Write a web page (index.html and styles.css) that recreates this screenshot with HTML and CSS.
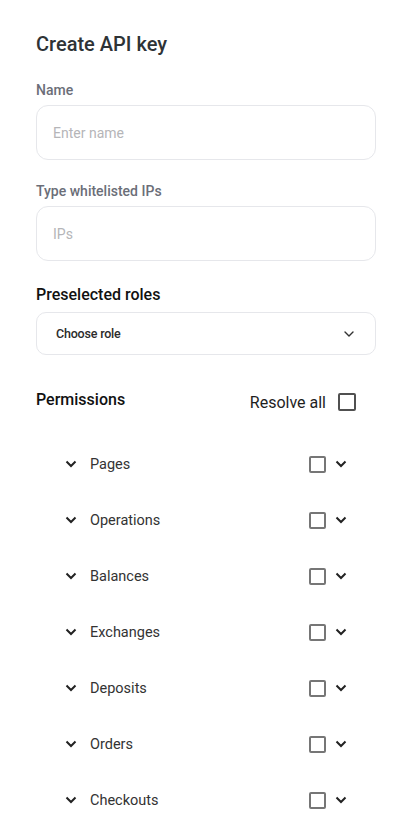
FILE: index.html
```html
<!DOCTYPE html>
<html>
<head>
<meta charset="utf-8">
<link rel="stylesheet" href="styles.css">
</head>
<body>
<div class="page">
  <h1 class="title">Create API key</h1>

  <div class="field-label">Name</div>
  <div class="input"><span class="placeholder">Enter name</span></div>

  <div class="field-label second">Type whitelisted IPs</div>
  <div class="input"><span class="placeholder">IPs</span></div>

  <div class="section-title roles">Preselected roles</div>
  <div class="select">
    <span class="select-text">Choose role</span>
    <svg class="select-chev" width="10" height="6" viewBox="0 0 10 6"><path d="M1 1l4 4 4-4" fill="none" stroke="#333" stroke-width="1.4" stroke-linecap="round" stroke-linejoin="round"/></svg>
  </div>

  <div class="perm-head">
    <span class="section-title">Permissions</span>
    <span class="resolve">Resolve all <span class="checkbox big"></span></span>
  </div>

  <div class="perm-list">
    <div class="perm-row">
      <svg class="chev" width="12" height="8" viewBox="0 0 12 8"><path d="M1.5 1.5l4.5 4.5 4.5-4.5" fill="none" stroke="#222" stroke-width="2"/></svg>
      <span class="perm-name">Pages</span>
      <span class="checkbox"></span>
      <svg class="chev right" width="12" height="8" viewBox="0 0 12 8"><path d="M1.5 1.5l4.5 4.5 4.5-4.5" fill="none" stroke="#222" stroke-width="2"/></svg>
    </div>
    <div class="perm-row">
      <svg class="chev" width="12" height="8" viewBox="0 0 12 8"><path d="M1.5 1.5l4.5 4.5 4.5-4.5" fill="none" stroke="#222" stroke-width="2"/></svg>
      <span class="perm-name">Operations</span>
      <span class="checkbox"></span>
      <svg class="chev right" width="12" height="8" viewBox="0 0 12 8"><path d="M1.5 1.5l4.5 4.5 4.5-4.5" fill="none" stroke="#222" stroke-width="2"/></svg>
    </div>
    <div class="perm-row">
      <svg class="chev" width="12" height="8" viewBox="0 0 12 8"><path d="M1.5 1.5l4.5 4.5 4.5-4.5" fill="none" stroke="#222" stroke-width="2"/></svg>
      <span class="perm-name">Balances</span>
      <span class="checkbox"></span>
      <svg class="chev right" width="12" height="8" viewBox="0 0 12 8"><path d="M1.5 1.5l4.5 4.5 4.5-4.5" fill="none" stroke="#222" stroke-width="2"/></svg>
    </div>
    <div class="perm-row">
      <svg class="chev" width="12" height="8" viewBox="0 0 12 8"><path d="M1.5 1.5l4.5 4.5 4.5-4.5" fill="none" stroke="#222" stroke-width="2"/></svg>
      <span class="perm-name">Exchanges</span>
      <span class="checkbox"></span>
      <svg class="chev right" width="12" height="8" viewBox="0 0 12 8"><path d="M1.5 1.5l4.5 4.5 4.5-4.5" fill="none" stroke="#222" stroke-width="2"/></svg>
    </div>
    <div class="perm-row">
      <svg class="chev" width="12" height="8" viewBox="0 0 12 8"><path d="M1.5 1.5l4.5 4.5 4.5-4.5" fill="none" stroke="#222" stroke-width="2"/></svg>
      <span class="perm-name">Deposits</span>
      <span class="checkbox"></span>
      <svg class="chev right" width="12" height="8" viewBox="0 0 12 8"><path d="M1.5 1.5l4.5 4.5 4.5-4.5" fill="none" stroke="#222" stroke-width="2"/></svg>
    </div>
    <div class="perm-row">
      <svg class="chev" width="12" height="8" viewBox="0 0 12 8"><path d="M1.5 1.5l4.5 4.5 4.5-4.5" fill="none" stroke="#222" stroke-width="2"/></svg>
      <span class="perm-name">Orders</span>
      <span class="checkbox"></span>
      <svg class="chev right" width="12" height="8" viewBox="0 0 12 8"><path d="M1.5 1.5l4.5 4.5 4.5-4.5" fill="none" stroke="#222" stroke-width="2"/></svg>
    </div>
    <div class="perm-row">
      <svg class="chev" width="12" height="8" viewBox="0 0 12 8"><path d="M1.5 1.5l4.5 4.5 4.5-4.5" fill="none" stroke="#222" stroke-width="2"/></svg>
      <span class="perm-name">Checkouts</span>
      <span class="checkbox"></span>
      <svg class="chev right" width="12" height="8" viewBox="0 0 12 8"><path d="M1.5 1.5l4.5 4.5 4.5-4.5" fill="none" stroke="#222" stroke-width="2"/></svg>
    </div>
  </div>
</div>
</body>
</html>
```
FILE: styles.css
```css
html, body {
  margin: 0;
  padding: 0;
  background: #ffffff;
}
body {
  font-family: Roboto, "Liberation Sans", sans-serif;
  color: #222;
}
.page {
  width: 340px;
  padding: 30px 0 40px 36px;
  display: flex;
  flex-direction: column;
}
.title {
  margin: 0;
  font-size: 20px;
  font-weight: 500;
  line-height: 28px;
  color: #2e3336;
}
.field-label {
  margin-top: 22px;
  font-size: 14px;
  font-weight: 500;
  line-height: 20px;
  color: #6b6e78;
}
.field-label.second {
  margin-top: 21px;
}
.input {
  margin-top: 5px;
  height: 55px;
  box-sizing: border-box;
  border: 1px solid #e6e7eb;
  border-radius: 12px;
  display: flex;
  align-items: center;
  padding-left: 16px;
}
.placeholder {
  font-size: 14px;
  color: #b5b5b8;
}
.section-title {
  font-size: 16px;
  font-weight: 500;
  line-height: 24px;
  color: #111;
}
.roles {
  margin-top: 22px;
}
.select {
  margin-top: 5px;
  height: 43px;
  box-sizing: border-box;
  border: 1px solid #e6e7eb;
  border-radius: 10px;
  display: flex;
  align-items: center;
  justify-content: space-between;
  padding: 0 21px 0 19px;
}
.select-text {
  font-size: 12.5px;
  font-weight: 500;
  color: #2b2b2b;
  letter-spacing: -0.2px;
}
.perm-head {
  margin-top: 33px;
  display: flex;
  justify-content: space-between;
  align-items: center;
  padding-right: 20px;
}
.resolve {
  display: flex;
  align-items: center;
  gap: 12px;
  font-size: 16px;
  color: #1e1e1e;
  margin-top: 4px;
}
.checkbox {
  width: 17px;
  height: 17px;
  box-sizing: border-box;
  border: 2px solid #767676;
  border-radius: 2px;
  display: inline-block;
}
.checkbox.big {
  width: 18px;
  height: 18px;
  border-color: #505050;
}
.perm-list {
  margin-top: 24px;
  display: flex;
  flex-direction: column;
}
.perm-row {
  height: 56px;
  display: flex;
  align-items: center;
  padding-left: 29px;
  padding-right: 29px;
}
.chev {
  flex: none;
}
.perm-name {
  margin-left: 13px;
  flex: 1;
  font-size: 14.5px;
  color: #333;
}
.chev.right {
  margin-left: 9px;
}
```
